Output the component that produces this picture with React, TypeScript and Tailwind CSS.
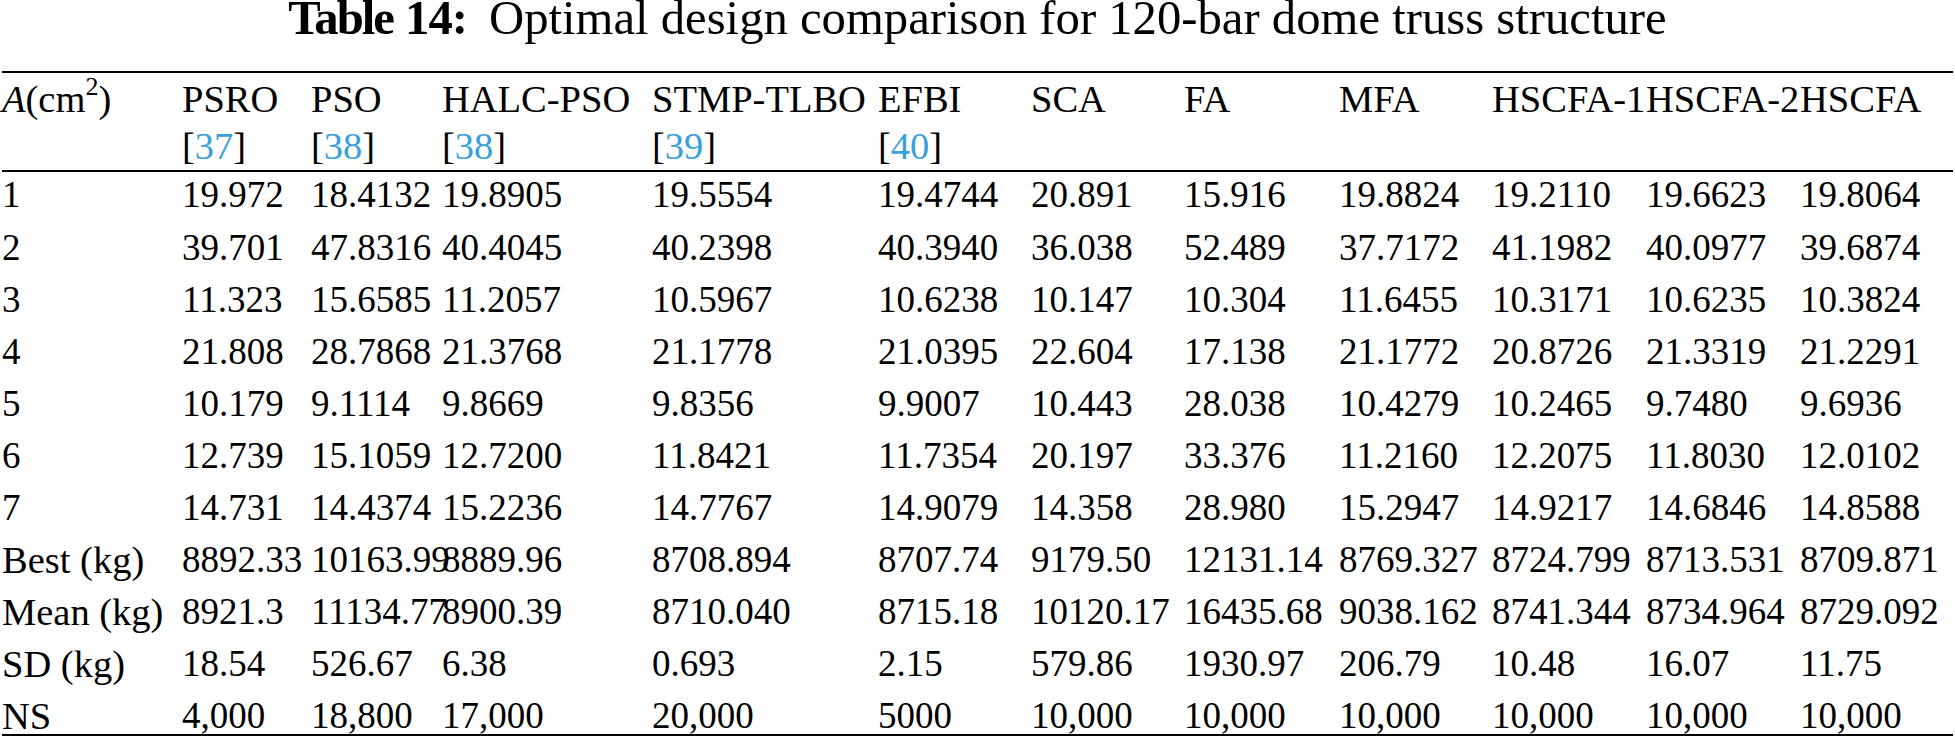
type Method = {
  name: string;
  cite?: string;
};

type Row = {
  label: string;
  values: string[];
};

const methods: Method[] = [
  { name: "PSRO", cite: "37" },
  { name: "PSO", cite: "38" },
  { name: "HALC-PSO", cite: "38" },
  { name: "STMP-TLBO", cite: "39" },
  { name: "EFBI", cite: "40" },
  { name: "SCA" },
  { name: "FA" },
  { name: "MFA" },
  { name: "HSCFA-1" },
  { name: "HSCFA-2" },
  { name: "HSCFA" },
];

const rows: Row[] = [
  { label: "1", values: ["19.972", "18.4132", "19.8905", "19.5554", "19.4744", "20.891", "15.916", "19.8824", "19.2110", "19.6623", "19.8064"] },
  { label: "2", values: ["39.701", "47.8316", "40.4045", "40.2398", "40.3940", "36.038", "52.489", "37.7172", "41.1982", "40.0977", "39.6874"] },
  { label: "3", values: ["11.323", "15.6585", "11.2057", "10.5967", "10.6238", "10.147", "10.304", "11.6455", "10.3171", "10.6235", "10.3824"] },
  { label: "4", values: ["21.808", "28.7868", "21.3768", "21.1778", "21.0395", "22.604", "17.138", "21.1772", "20.8726", "21.3319", "21.2291"] },
  { label: "5", values: ["10.179", "9.1114", "9.8669", "9.8356", "9.9007", "10.443", "28.038", "10.4279", "10.2465", "9.7480", "9.6936"] },
  { label: "6", values: ["12.739", "15.1059", "12.7200", "11.8421", "11.7354", "20.197", "33.376", "11.2160", "12.2075", "11.8030", "12.0102"] },
  { label: "7", values: ["14.731", "14.4374", "15.2236", "14.7767", "14.9079", "14.358", "28.980", "15.2947", "14.9217", "14.6846", "14.8588"] },
  { label: "Best (kg)", values: ["8892.33", "10163.99", "8889.96", "8708.894", "8707.74", "9179.50", "12131.14", "8769.327", "8724.799", "8713.531", "8709.871"] },
  { label: "Mean (kg)", values: ["8921.3", "11134.77", "8900.39", "8710.040", "8715.18", "10120.17", "16435.68", "9038.162", "8741.344", "8734.964", "8729.092"] },
  { label: "SD (kg)", values: ["18.54", "526.67", "6.38", "0.693", "2.15", "579.86", "1930.97", "206.79", "10.48", "16.07", "11.75"] },
  { label: "NS", values: ["4,000", "18,800", "17,000", "20,000", "5000", "10,000", "10,000", "10,000", "10,000", "10,000", "10,000"] },
];

// column tracks measured off the reference, first one holds the row labels
const tableCols =
  "grid grid-cols-[180px_129px_131px_210px_226px_153px_153px_155px_153px_154px_154px_153px]";

export default function App() {
  return (
    <div className="h-[742px] w-[1955px] overflow-hidden bg-white font-['Liberation_Serif','Times_New_Roman',serif] text-black">
      <h1 className="text-center text-[48.7px] leading-[37px] whitespace-nowrap">
        <span className="font-bold">
          <span className="tracking-[-2px]">Table</span> <span className="tracking-[-1px]">14:</span>
        </span>
        <span className="ml-[22px]">Optimal design comparison for 120-bar dome truss structure</span>
      </h1>

      <div className="mx-[2px] mt-[34px]">
        <div className="h-[2px] bg-black" />

        <div className={`${tableCols} pt-[2.7px] text-[38.5px] leading-[47.4px]`}>
          <div className="h-[94.8px] whitespace-nowrap">
            <span className="italic">A</span>(cm<sup className="text-[26px] -top-[17px]">2</sup>)
          </div>
          {methods.map((m) => (
            <div key={m.name} className="h-[94.8px] whitespace-nowrap">
              <div>{m.name}</div>
              {m.cite && (
                <div>
                  [<span className="text-[#3ba0d8]">{m.cite}</span>]
                </div>
              )}
            </div>
          ))}
        </div>

        <div className="h-[2px] bg-black" />

        {rows.map((row, i) => (
          <TableRow key={row.label} row={row} last={i === rows.length - 1} />
        ))}

        <div className="h-[2.5px] bg-black" />
      </div>
    </div>
  );
}

function TableRow({ row, last }: { row: Row; last: boolean }) {
  const numericLabel = /^\d+$/.test(row.label);

  return (
    <div className={`${tableCols} leading-[46px] whitespace-nowrap ${last ? "h-[40.5px]" : "h-[52.1px]"}`}>
      <div className={numericLabel ? "text-[37px]" : "text-[38.5px]"}>{row.label}</div>
      {row.values.map((v, j) => (
        <div key={j} className="text-[37px]">
          {v}
        </div>
      ))}
    </div>
  );
}
